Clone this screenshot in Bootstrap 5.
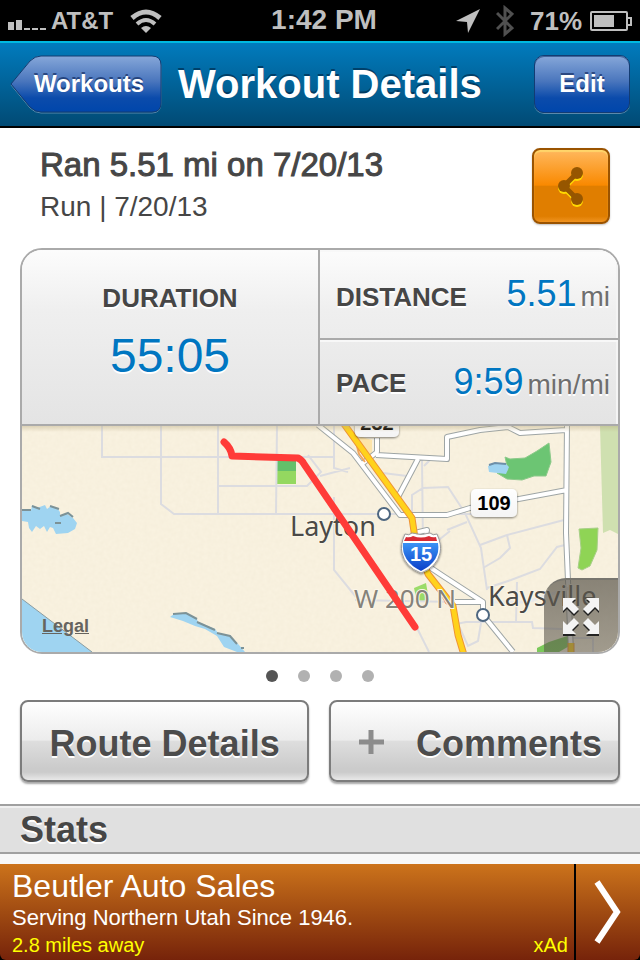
<!DOCTYPE html>
<html lang="en">
<head>
<meta charset="utf-8">
<meta name="viewport" content="width=device-width, initial-scale=1">
<title>Workout Details</title>
<link href="https://cdn.jsdelivr.net/npm/bootstrap@5.3.0/dist/css/bootstrap.min.css" rel="stylesheet">
<style>
  body { font-family: "Liberation Sans", Arial, sans-serif; background: #fff; color: #464646; }
  svg { display: block; }

  /* status bar */
  .status-bar { height: 41px; background: #000; color: #bfbfbf; font-weight: bold; line-height: 40px; }
  .status-side { flex: 1 1 0; }
  .fs-24 { font-size: 24px; }
  .fs-26 { font-size: 26px; }
  .fs-28 { font-size: 28px; }

  /* title bar */
  .title-bar { height: 87px; padding: 0 10px 2px; border-top: 2px solid #00b9e0; border-bottom: 2px solid #000; background: linear-gradient(#017bbd, #014a74); }
  .title-bar h1 { font-size: 40px; line-height: 48px; font-weight: bold; color: #fff; text-shadow: 0 -2px 0 rgba(0,35,65,.6); white-space: nowrap; }
  .bar-btn { height: 58px; border: 0; padding: 0; color: #fff; font-size: 24px; font-weight: bold; line-height: 54px; text-shadow: 0 -2px 0 rgba(0,20,70,.55); }
  .back-btn { width: 152px; background: none; }
  .back-btn span { padding-left: 6px; }
  .edit-btn { width: 96px; border: 1px solid #123c73; border-radius: 10px; background: linear-gradient(#86a7d9, #4a76bd 45%, #0b4bab 75%, #0046ab); box-shadow: 0 1px 0 #5a89ab, inset 0 1px 0 #40639a; }

  /* workout heading */
  .summary { padding: 20px 30px 24px 40px; }
  .summary h2 { font-size: 33px; line-height: 34px; font-weight: normal; -webkit-text-stroke: 1px #464646; }
  .summary p { font-size: 28px; line-height: 34px; }
  .share-btn { width: 78px; height: 76px; padding: 0; border: 2px solid #9a5300; border-radius: 8px; background: linear-gradient(#ffb85e, #f98900 49%, #e07e00 50%, #e07e00 92%, #f09320); box-shadow: inset 0 2px 1px #ffd56a, 0 1px 2px rgba(0,0,0,.25); }

  /* statistics and map */
  .overview { margin: 0 20px; border: 2px solid #aaa; border-radius: 22px; overflow: hidden; }
  .figures { border-bottom: 2px solid #aaa; background: linear-gradient(#fcfcfc, #efefef 35%, #e4e4e4); text-shadow: 0 2px 0 #fff; }
  .cell-duration { height: 174px; border-right: 2px solid #aaa; padding-top: 32px; }
  .figure-label { font-size: 26px; line-height: 32px; font-weight: bold; }
  .figure-value { color: #0076c1; font-size: 36px; line-height: 40px; }
  .value-big { font-size: 48px; line-height: 56px; margin-top: 14px; }
  .figure-unit { color: #6e6e6e; font-size: 28px; }
  .cell-side { padding: 2px 8px 0 16px; box-shadow: inset 0 2px 0 #f8f8f8, inset -2px 0 0 #f4f4f4; }
  .cell-distance { height: 90px; border-bottom: 2px solid #aaa; }
  .cell-pace { height: 84px; }
  .map-box { background: #f8f1df; }
  .map-legal { left: 20px; bottom: 16px; font-size: 18px; line-height: 20px; font-weight: bold; color: #66645f; }
  .map-expand { right: 0; bottom: 0; width: 74px; height: 74px; padding: 16px 0 0; border: 0; border-top: 2px solid #77756e; border-radius: 22px 0 0 0; background: linear-gradient(rgba(90,85,75,.7), rgba(90,85,75,.55)); }

  .page-dots { gap: 20px; padding: 16px 0 18px; }
  .page-dot { width: 12px; height: 12px; border: 0; padding: 0; border-radius: 50%; background: #b1b1b1; }
  .page-dot-on { background: #555; }

  /* action buttons */
  .actions { gap: 20px; padding: 0 20px 22px; }
  .action-btn { height: 82px; width: 50%; padding: 6px 0 0; border: 2px solid #7c7c7c; border-radius: 8px; color: #4c4c4c; font-size: 36px; font-weight: bold; text-shadow: 0 2px 0 #fff; background: linear-gradient(#fff, #ececec 49%, #dedede 50%, #cbcbcb 85%, #cbcbcb 90%, #e8e8e8); box-shadow: 0 2px 2px rgba(0,0,0,.35); }

  .section-title { height: 50px; padding: 0 20px; border-top: 2px solid #a0a0a0; border-bottom: 2px solid #a0a0a0; background: #e0e0e0; box-shadow: inset 0 2px 0 #f0f0f0; font-size: 36px; line-height: 48px; font-weight: bold; text-shadow: 0 2px 0 #fff; }
  .list-edge { height: 10px; background: #f7f7f7; }

  /* advert */
  .advert-wrap { background: #000; }
  .advert { height: 96px; color: #fff; border-radius: 0 0 6px 6px; background: linear-gradient(#cc731b, #a04b12 50%, #76230a); }
  .advert:hover { color: #fff; }
  .advert-text { padding: 4px 6px 4px 12px; }
  .advert-name { font-size: 32px; line-height: 36px; }
  .advert-line { font-size: 22px; line-height: 28px; }
  .advert-note { font-size: 20px; line-height: 26px; color: #ff0; }
  .advert-go { width: 66px; border-left: 2px solid #000; }
</style>
</head>
<body>
<div class="status-bar d-flex">
  <div class="status-side d-flex align-items-center ps-2">
    <svg width="39" height="20" viewBox="0 0 39 20" fill="#bfbfbf" aria-hidden="true"><path d="M0 11h6v8H0zM8 9h6v10H8zM16 17h6v2h-6zM24 17h6v2h-6zM32 17h6v2h-6z"/></svg>
    <span class="fs-24 ms-1">AT&amp;T</span>
    <svg class="ms-3" width="34" height="24" viewBox="0 0 34 24" aria-hidden="true"><g fill="none" stroke="#bfbfbf"><path d="M3 9Q17-3 31 9" stroke-width="5"/><path d="M8 15q9-8 18 0" stroke-width="4"/></g><path d="M12 19q5-4 10 0l-5 5z" fill="#bfbfbf"/></svg>
  </div>
  <div class="fs-28">1:42 PM</div>
  <div class="status-side d-flex align-items-center justify-content-end">
    <svg width="24" height="24" viewBox="0 0 24 24" fill="#bfbfbf" aria-hidden="true"><path d="M24 0 12 24 11 13 0 12z"/></svg>
    <svg class="ms-3" width="18" height="32" viewBox="0 0 18 32" fill="none" stroke="#505050" stroke-width="3" aria-hidden="true"><path d="M1 8l15 15-7 6V3l7 6L1 24"/></svg>
    <span class="fs-26 ms-3">71%</span>
    <svg class="mx-2" width="42" height="22" viewBox="0 0 42 22" aria-hidden="true"><rect x="1" y="2" width="36" height="18" rx="1" fill="none" stroke="#bfbfbf" stroke-width="2"/><path d="M4 5h20v12H4z" fill="#bfbfbf"/><path d="M38 8h3v7h-3" fill="none" stroke="#bfbfbf" stroke-width="2"/></svg>
  </div>
</div>

<header class="title-bar d-flex align-items-center gap-3">
  <button type="button" class="bar-btn back-btn position-relative flex-shrink-0">
    <svg class="position-absolute top-0 start-0" width="152" height="60" viewBox="0 0 152 60" aria-hidden="true">
      <defs><linearGradient id="backFill" x2="0" y2="1"><stop stop-color="#86a7d9"/><stop offset=".45" stop-color="#4a76bd"/><stop offset=".75" stop-color="#0b4bab"/><stop offset="1" stop-color="#0046ab"/></linearGradient></defs>
      <path d="M1 30 20 6Q25 2 31 2H142q9 0 9 9V48q0 10-9 10H31q-6 0-11-5z" fill="none" stroke="#5a89ab" stroke-width="1"/>
      <path d="M1 29 20 6Q25 1 31 1H142q9 0 9 9V48q0 9-9 9H31q-6 0-11-5z" fill="url(#backFill)" stroke="#123c73" stroke-width="1"/>
    </svg>
    <span class="position-relative">Workouts</span>
  </button>
  <h1 class="m-0">Workout Details</h1>
  <button type="button" class="bar-btn edit-btn ms-auto flex-shrink-0">Edit</button>
</header>

<main>
  <section class="summary d-flex justify-content-between">
    <div>
      <h2 class="mb-2">Ran 5.51 mi on 7/20/13</h2>
      <p class="m-0">Run | 7/20/13</p>
    </div>
    <button type="button" class="share-btn d-flex align-items-center justify-content-center" aria-label="Share">
      <svg width="28" height="42" viewBox="0 0 28 42" aria-hidden="true">
        <g fill="#ffd800" stroke="#ffd800"><path d="M20 10 7 23l13 13" fill="none" stroke-width="5"/><g stroke="none"><circle cx="20" cy="10" r="6"/><circle cx="7" cy="23" r="6"/><circle cx="20" cy="36" r="6"/></g></g>
        <g fill="#965600" stroke="#965600"><path d="M20 8 7 21l13 13" fill="none" stroke-width="5"/><g stroke="none"><circle cx="20" cy="8" r="6"/><circle cx="7" cy="21" r="6"/><circle cx="20" cy="34" r="6"/></g></g>
      </svg>
    </button>
  </section>

  <section class="overview">
    <div class="figures row g-0">
      <div class="col-6 cell-duration text-center">
        <div class="figure-label">DURATION</div>
        <div class="figure-value value-big">55:05</div>
      </div>
      <div class="col-6">
        <div class="cell-side cell-distance d-flex justify-content-between align-items-center">
          <span class="figure-label pt-1">DISTANCE</span>
          <span class="figure-value">5.51<span class="figure-unit ms-1">mi</span></span>
        </div>
        <div class="cell-side cell-pace d-flex justify-content-between align-items-center">
          <span class="figure-label">PACE</span>
          <span class="figure-value">9:59<span class="figure-unit ms-1">min/mi</span></span>
        </div>
      </div>
    </div>

    <div class="map-box position-relative">
      <svg class="w-100 h-auto" viewBox="22 426 596 226" fill="none" role="img" aria-label="Route map">
        <defs>
          <linearGradient id="shieldFill" x2="0" y2="1"><stop stop-color="#3b93f5"/><stop offset="1" stop-color="#0b3fc8"/></linearGradient>
          <linearGradient id="plateFill" x2="0" y2="1"><stop stop-color="#fff"/><stop offset="1" stop-color="#f4f4f4"/></linearGradient>
          <linearGradient id="mapShade" x2="0" y2="1"><stop stop-color="#b5a67c" stop-opacity=".4"/><stop offset="1" stop-color="#b5a67c" stop-opacity="0"/></linearGradient>
          <filter id="plateShadow" x="-20%" y="-20%" width="140%" height="160%"><feDropShadow dx="0" dy="1" stdDeviation="1" flood-opacity=".5"/></filter>
          <filter id="paper"><feTurbulence type="fractalNoise" baseFrequency=".25" numOctaves="2"/><feColorMatrix values="0 0 0 0 .7 0 0 0 0 .62 0 0 0 0 .45 0 0 0 .15 -.03"/></filter>
        </defs>
        <path d="M22 426h596v226H22z" fill="#f9f2e0"/>
        <path d="M22 426h596v226H22z" filter="url(#paper)"/>
        <!-- parks -->
        <path d="M600 426h18v108l-8-4-7 3z" fill="#cfe0b0"/>
        <path d="M277 458h19v13h-19z" fill="#64c06a"/><path d="M277 471h19v13h-19z" fill="#94d860"/>
        <path d="M505 457 510 459 525 458 537 451 549 443 551 462 546 476 534 476 522 480 507 479 497 473 508 470z" fill="#6cc573" stroke="#8cc98a"/>
        <path d="M579 529 598 528 597 550 590 566 582 570 578 568 581 548z" fill="#8fd455" stroke="#a8cf88"/>
        <path d="M414 588l12-5 3 17-12 2z" fill="#9bdb68"/>
        <path d="M537 652v-4l12-6 12-4 10-3v10l-12 7z" fill="#7bc95a"/>
        <!-- water -->
        <path d="M22 599 92 652H22z" fill="#9fd4f1"/><path d="M22 599 92 652" stroke="#8b9ca0"/>
        <path d="M22 511 31 511 32 505 37 508 45 505 47 509 51 506 57 508 60 512 60 516 67 514 73 518 77 523 75 529 68 533 56 534 53 528 50 527 47 532 44 526 40 529 36 526 32 532 29 528 28 522 22 521z" fill="#9fd4f1"/>
        <path d="M22 510h9M32 506l8 3M50 506l9 3M60 516l8-3 5 4M55 523h6" stroke="#7c9297" stroke-width="2"/>
        <path d="M170 617 174 614 185 613 197 619 198 622 215 629 218 633 231 637 239 645 245 652H237L224 647 217 636 205 629 195 626 183 621z" fill="#9fd4f1"/>
        <path d="M173 614l13-1 11 6M197 622l18 8M217 633l13 3 7 8M241 648h3" stroke="#7c9297" stroke-width="2"/>
        <path d="M488 466 494 463 505 463 509 467 506 474 489 472z" fill="#9fd4f1"/><path d="M489 465l6-2 11 1" stroke="#6d8fa8" stroke-width="2"/>
        <path d="M358 436 372 440v13l-6 5z" fill="#fce4ab"/>
        <!-- side streets -->
        <path d="M102 426v31h232M161 426v78l13 10H500M218 426v88M277 426l-1 88M219 486h88l14-14-13-17M334 426v42l14 4M320 476l30-8M383 473l24 3M334 497v73l22 27M355 600l100 2M417 628l12 24M422 460l1 86M412 530v-35l11-7 25-1 17 26 16 35 6 42M430 460l-6 6M447 530l20-8M435 543l15-12M480 545l27-10 57-15M507 535l3 13-10 10-17 10M487 588l24-8 29-11 17-22 8-2M517 582l-1 41M456 624l10-2h66l1 6 29 1M458 624l10 22 10-5 3-18M571 638h22v14" stroke="#dcdce0" stroke-width="2"/>
        <!-- main roads -->
        <g stroke-linejoin="round">
          <path d="M318 425 353 453 400 515H447L470 508 567 490M567 424 566 533 571 652M377 438v14l-15 12M376 455l71 4v-22l33-7 28-3 12 6 46-3M418 459l-20 38M428 566l15 10 40 26v13l30 37M455 602h28M415 533l12-3-1 6" stroke="#9ea5a5" stroke-width="6"/>
          <path d="M318 425 353 453 400 515H447L470 508 567 490M567 424 566 533 571 652M377 438v14l-15 12M376 455l71 4v-22l33-7 28-3 12 6 46-3M418 459l-20 38M428 566l15 10 40 26v13l30 37M455 602h28M415 533l12-3-1 6" stroke="#fff" stroke-width="4"/>
          <path d="M490 602h37l43-14" stroke="#e9e9ea" stroke-width="3"/>
          <path d="M355 438l4 16 6 8M440 589l6 14 7 4" stroke="#f2a65c" stroke-width="2"/>
          <path d="M344 424 370 460 412 518 416 545 428 574 453 606 458 635 464 655M571 643v12" stroke="#ee9436" stroke-width="7"/>
          <path d="M344 424 370 460 412 518 416 545 428 574 453 606 458 635 464 655M571 643v12" stroke="#ffd21c" stroke-width="5"/>
        </g>
        <!-- place names -->
        <g font-family="Noto Sans, sans-serif" font-size="27" fill="#4b4a47" stroke="#fbf6e8" stroke-width="2" paint-order="stroke">
          <text x="290" y="536">Layton</text>
          <text x="354" y="608" font-size="26" fill="#85827a">W 200 N</text>
          <text x="488" y="606">Kaysville</text>
        </g>
        <g fill="#fff" stroke="#4d6680" stroke-width="2"><circle cx="384" cy="514" r="6"/><circle cx="483" cy="615" r="6"/></g>
        <path d="M224 442q7 6 8 14l66 2q4 2 6 6L415 627" stroke="#ff3b38" stroke-width="7" stroke-linecap="round" stroke-linejoin="round"/>
        <!-- route signs -->
        <g filter="url(#plateShadow)" fill="url(#plateFill)"><rect x="355" y="410" width="44" height="27" rx="5"/><rect x="471" y="489" width="46" height="28" rx="5"/></g>
        <g font-family="Liberation Sans, Arial, sans-serif" font-size="20" font-weight="bold" text-anchor="middle" fill="#000"><text x="377" y="430">232</text><text x="494" y="510">109</text></g>
        <path d="M405 534q4 2 7-1 9 3 18 0 3 3 7 1 5 11 3 19-3 14-19 20-16-6-19-20-2-8 3-19z" fill="#fff" stroke="#9c9c9c" filter="url(#plateShadow)"/>
        <path d="M406 537q4 1 7-1 8 3 16 0 3 2 7 1l1 4H404z" fill="#d82c35"/>
        <path d="M403 543h35q3 18-17 28-20-10-18-28z" fill="url(#shieldFill)"/>
        <text x="421" y="561" font-family="Liberation Sans, Arial, sans-serif" font-size="20" font-weight="bold" text-anchor="middle" fill="#fff">15</text>
        <path d="M22 426h596v6H22z" fill="url(#mapShade)"/>
      </svg>
      <a href="#legal" class="map-legal position-absolute">Legal</a>
      <button type="button" class="map-expand position-absolute d-flex justify-content-center" aria-label="Expand map">
        <svg width="38" height="42" viewBox="0 0 38 42" aria-hidden="true">
          <defs><path id="arrowSet" d="M1 1H14L10 5 17 12 12 17 5 10 1 14zM37 1H24L28 5 21 12 26 17 33 10 37 14zM1 37H14L10 33 17 26 12 21 5 28 1 24zM37 37H24L28 33 21 26 26 21 33 28 37 24z"/></defs>
          <use href="#arrowSet" y="3" fill="#222"/><use href="#arrowSet" y="1" fill="#f4f4f4"/>
        </svg>
      </button>
    </div>
  </section>

  <nav class="page-dots d-flex justify-content-center" aria-label="Pages">
    <button type="button" class="page-dot page-dot-on" aria-label="Page 1"></button>
    <button type="button" class="page-dot" aria-label="Page 2"></button>
    <button type="button" class="page-dot" aria-label="Page 3"></button>
    <button type="button" class="page-dot" aria-label="Page 4"></button>
  </nav>

  <div class="actions d-flex">
    <button type="button" class="action-btn">Route Details</button>
    <button type="button" class="action-btn d-flex align-items-center justify-content-between ps-4 pe-3">
      <svg class="ms-1" width="26" height="28" viewBox="0 0 26 28" aria-hidden="true"><path d="M0 12h25M12 0v24" stroke="#8c8c8c" stroke-width="5"/></svg>
      <span>Comments</span>
    </button>
  </div>

  <h2 class="section-title m-0">Stats</h2>
  <div class="list-edge"></div>
</main>

<footer class="advert-wrap">
  <a href="#advert" class="advert d-flex text-decoration-none">
    <span class="advert-text flex-grow-1">
      <span class="advert-name d-block">Beutler Auto Sales</span>
      <span class="advert-line d-block">Serving Northern Utah Since 1946.</span>
      <span class="advert-note d-flex justify-content-between"><span>2.8 miles away</span><span>xAd</span></span>
    </span>
    <span class="advert-go d-flex align-items-center justify-content-center">
      <svg width="28" height="64" viewBox="0 0 28 64" fill="none" stroke="#fff" stroke-width="6" aria-hidden="true"><path d="M3 2 23 32 3 62"/></svg>
    </span>
  </a>
</footer>
<script src="https://cdn.jsdelivr.net/npm/bootstrap@5.3.0/dist/js/bootstrap.bundle.min.js"></script>
</body>
</html>
